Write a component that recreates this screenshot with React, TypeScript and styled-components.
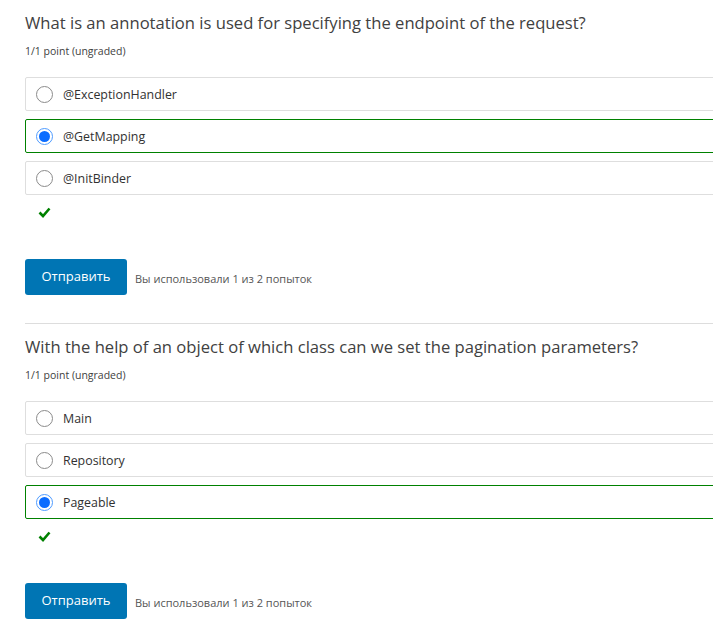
import React from "react";
import styled, { createGlobalStyle } from "styled-components";

const Global = createGlobalStyle`
  html, body { margin: 0; padding: 0; background: #fff; overflow: hidden; }
  body { font-family: "Open Sans", "Noto Sans", sans-serif; color: #313131; }
`;

const Page = styled.div`
  padding: 10px 0 0 25px;
  width: 720px;
`;

const Problem = styled.section<{ $divider?: boolean }>`
  display: flex;
  flex-direction: column;
  padding-bottom: 28px;
  border-bottom: ${(p) => (p.$divider ? "1px solid #ddd" : "none")};
  margin-bottom: ${(p) => (p.$divider ? "10px" : "0")};
`;

const Title = styled.h3`
  margin: 0;
  font-family: "Open Sans", sans-serif;
  font-weight: 400;
  font-size: 16.6px;
  line-height: 26px;
  color: #414141;
`;

const Points = styled.div`
  margin-top: 7px;
  font-family: "Open Sans", sans-serif;
  font-size: 10.5px;
  line-height: 16px;
  color: #414141;
`;

const Options = styled.div`
  display: flex;
  flex-direction: column;
  gap: 8px;
  margin-top: 18px;
`;

const Option = styled.label<{ $correct?: boolean }>`
  display: flex;
  align-items: center;
  gap: 10px;
  height: 34px;
  box-sizing: border-box;
  padding-left: 10px;
  border: 1px solid ${(p) => (p.$correct ? "#008100" : "#dedede")};
  border-radius: 2px;
  font-family: "Open Sans", sans-serif;
  font-size: 12.4px;
  color: #313131;
`;

const Radio = styled.span<{ $checked?: boolean }>`
  width: 17px;
  height: 17px;
  box-sizing: border-box;
  border-radius: 50%;
  border: ${(p) => (p.$checked ? "1.5px solid #4e9bff" : "1px solid #8b8b8b")};
  display: flex;
  align-items: center;
  justify-content: center;
  &::after {
    content: "";
    display: ${(p) => (p.$checked ? "block" : "none")};
    width: 11px;
    height: 11px;
    border-radius: 50%;
    background: #0a6cff;
  }
`;

const Check = styled.div`
  margin: 12px 0 0 13px;
  height: 12px;
  display: flex;
`;

const Actions = styled.div`
  display: flex;
  align-items: center;
  gap: 8px;
  margin-top: 40px;
`;

const Submit = styled.button`
  width: 102px;
  height: 36px;
  border: none;
  border-radius: 3px;
  background: #0075b4;
  color: #fff;
  font-family: "Open Sans", sans-serif;
  font-size: 13px;
  padding: 0;
  padding-bottom: 2px;
`;

const Attempts = styled.span`
  font-family: "Open Sans", sans-serif;
  font-size: 11px;
  color: #555;
  padding-top: 2px;
`;

type Q = { title: string; options: string[]; selected: number };

const questions: Q[] = [
  {
    title: "What is an annotation is used for specifying the endpoint of the request?",
    options: ["@ExceptionHandler", "@GetMapping", "@InitBinder"],
    selected: 1,
  },
  {
    title: "With the help of an object of which class can we set the pagination parameters?",
    options: ["Main", "Repository", "Pageable"],
    selected: 2,
  },
];

const CheckIcon = () => (
  <svg width="13" height="11" viewBox="0 0 13 11">
    <path d="M1.5 5.5 L5 9 L11.5 1.5" fill="none" stroke="#008100" strokeWidth="2.6" />
  </svg>
);

export default function App() {
  return (
    <>
      <Global />
      <Page>
        {questions.map((q, i) => (
          <Problem key={i} $divider={i === 0}>
            <Title>{q.title}</Title>
            <Points>1/1 point (ungraded)</Points>
            <Options>
              {q.options.map((o, j) => (
                <Option key={j} $correct={j === q.selected}>
                  <Radio $checked={j === q.selected} />
                  {o}
                </Option>
              ))}
            </Options>
            <Check>
              <CheckIcon />
            </Check>
            <Actions>
              <Submit>Отправить</Submit>
              <Attempts>Вы использовали 1 из 2 попыток</Attempts>
            </Actions>
          </Problem>
        ))}
      </Page>
    </>
  );
}
